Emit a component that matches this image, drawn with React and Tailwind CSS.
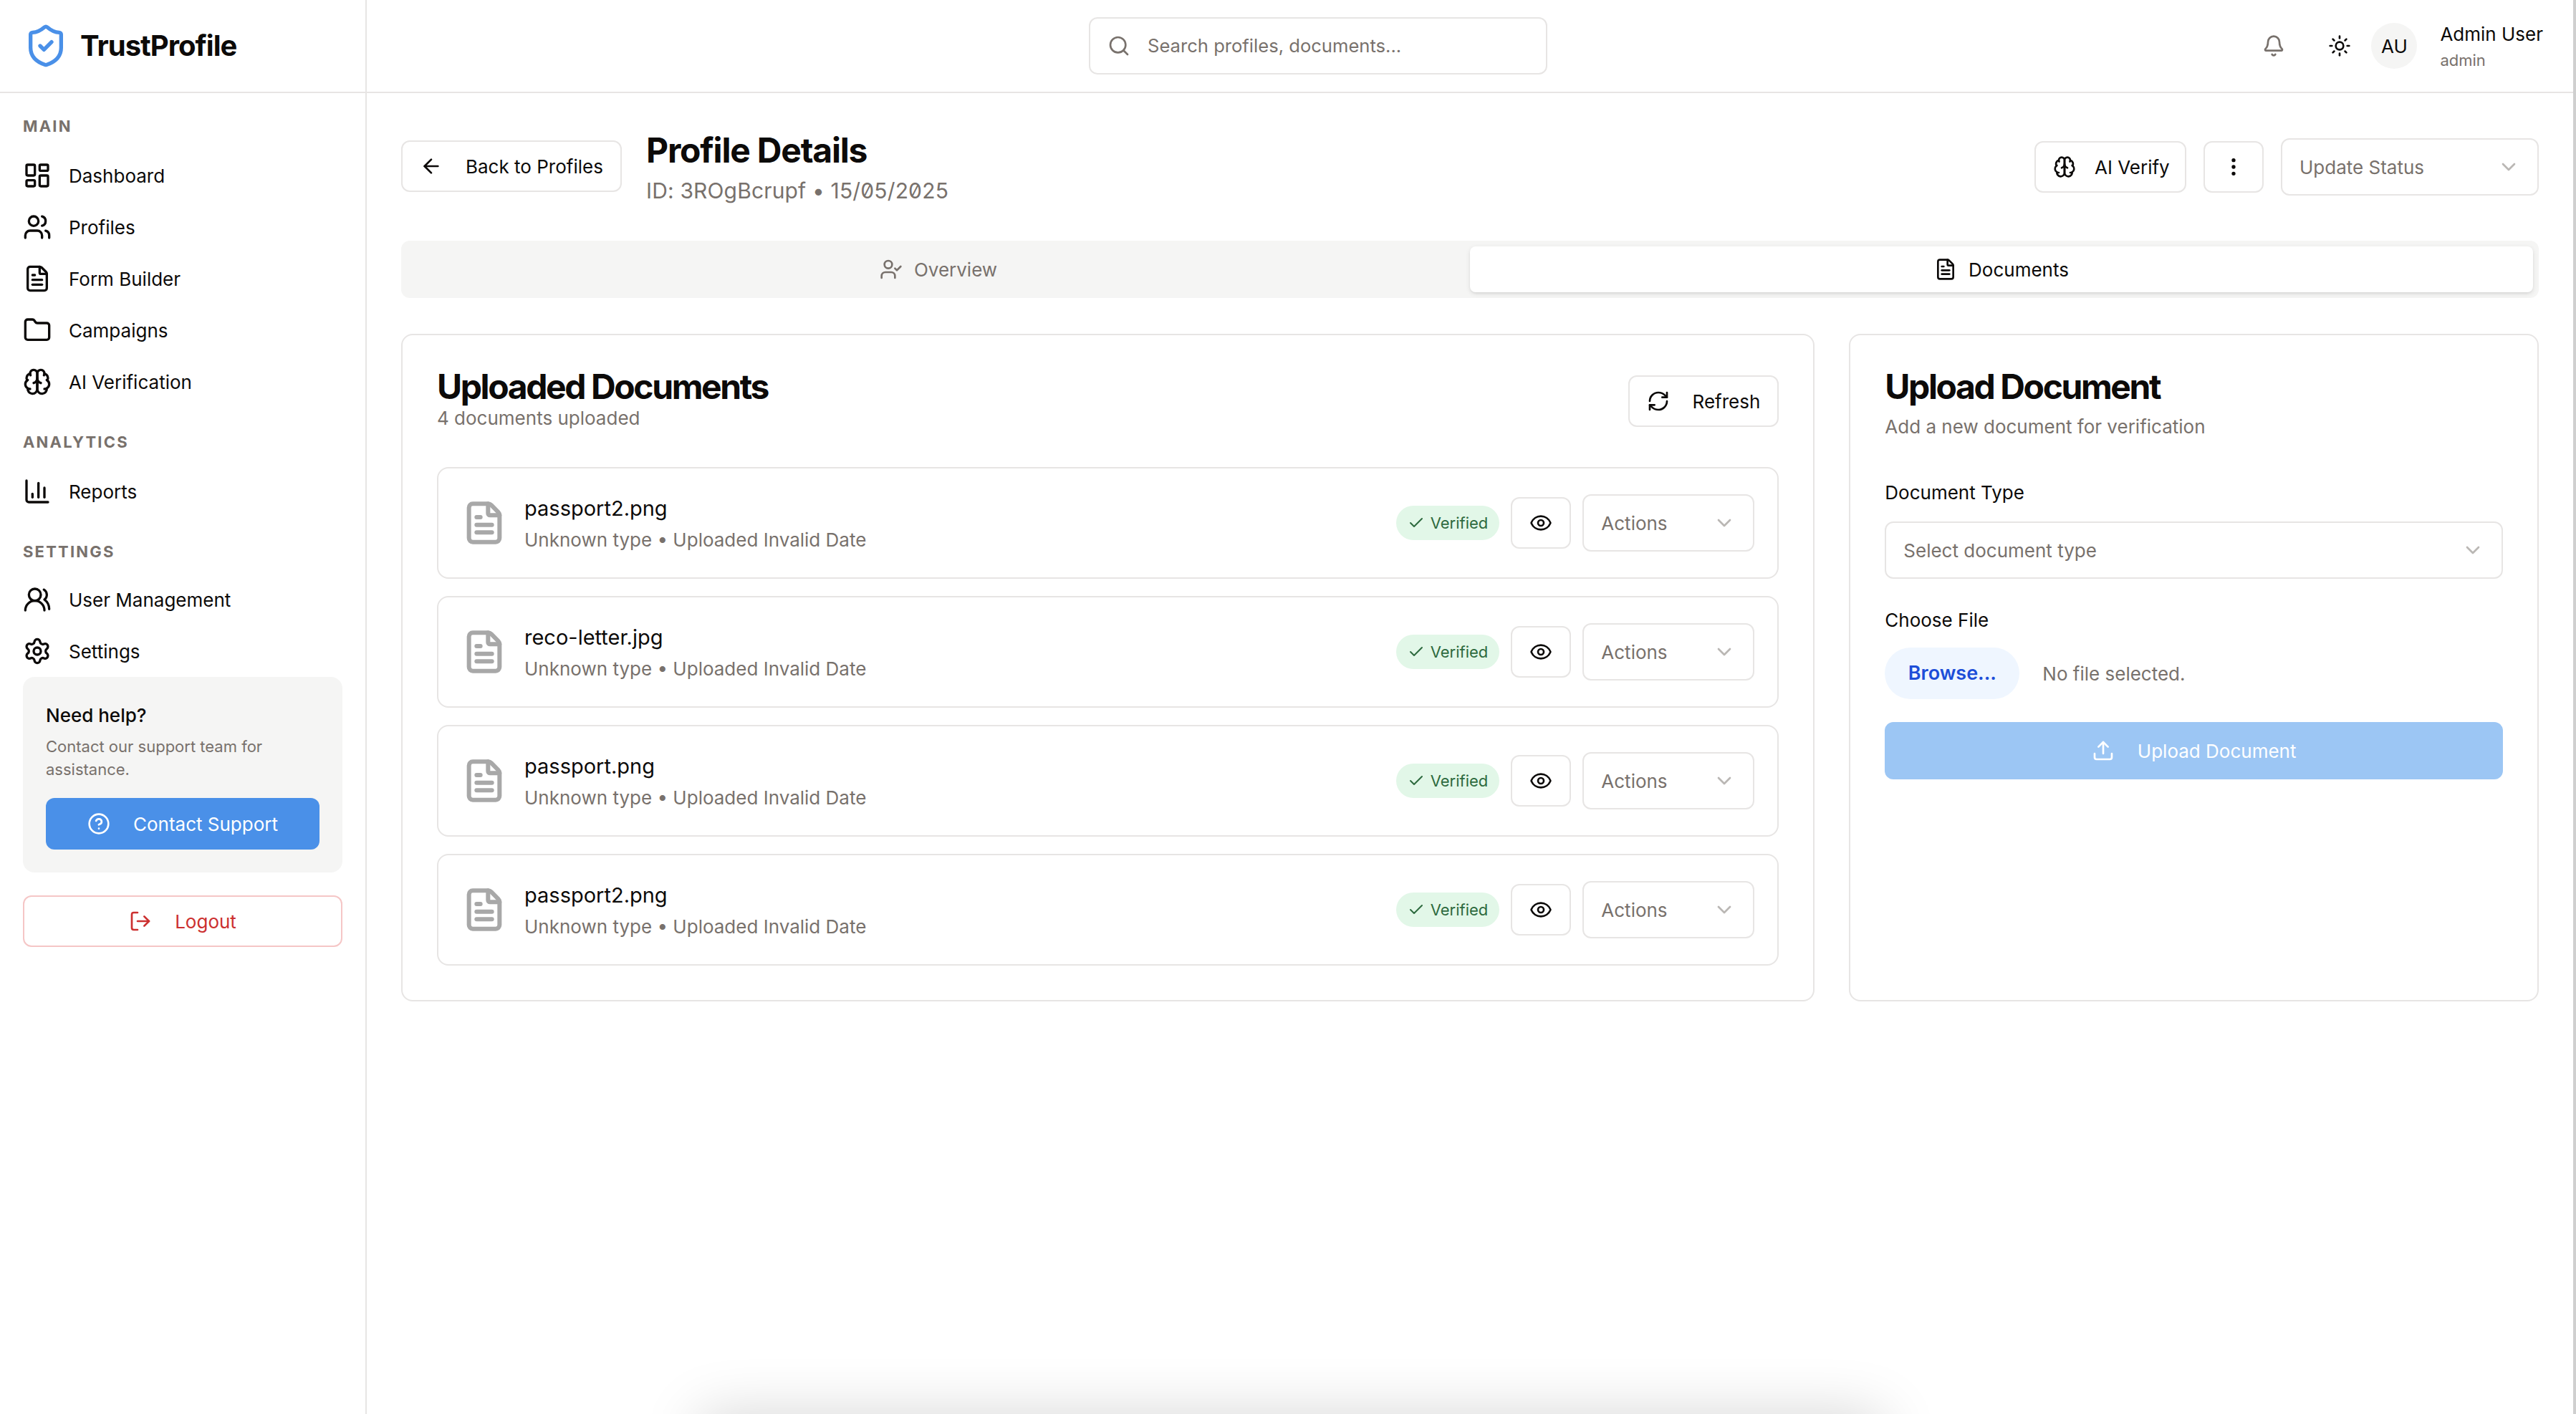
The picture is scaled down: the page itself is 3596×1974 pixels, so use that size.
import React from "react";
import {
  LayoutDashboard, Users, FileText, Folder, ChartColumn, UsersRound, Settings, CircleHelp, LogOut,
  Search, Bell, Sun, ArrowLeft, EllipsisVertical, ChevronDown, UserCheck, RefreshCw, Eye, Check, Upload, ShieldCheck,
} from "lucide-react";

const font = "font-['Inter','Liberation_Sans',sans-serif]";

function BrainIcon({ className = "" }) {
  return (
    <svg className={className} viewBox="0 0 24 24" fill="none" stroke="currentColor" strokeWidth="2" strokeLinecap="round" strokeLinejoin="round">
      <path d="M12 5a3 3 0 1 0-5.997.125 4 4 0 0 0-2.526 5.77 4 4 0 0 0 .556 6.588A4 4 0 1 0 12 18Z" />
      <path d="M12 5a3 3 0 1 1 5.997.125 4 4 0 0 1 2.526 5.77 4 4 0 0 1-.556 6.588A4 4 0 1 1 12 18Z" />
      <path d="M15 13a4.5 4.5 0 0 1-3-4 4.5 4.5 0 0 1-3 4" />
      <path d="M17.599 6.5a3 3 0 0 0 .399-1.375" />
      <path d="M6.003 5.125A3 3 0 0 0 6.401 6.5" />
      <path d="M3.477 10.896a4 4 0 0 1 .585-.396" />
      <path d="M19.938 10.5a4 4 0 0 1 .585.396" />
      <path d="M6 18a4 4 0 0 1-1.967-.516" />
      <path d="M19.967 17.484A4 4 0 0 1 18 18" />
    </svg>
  );
}

function NavItem({ icon: Icon, label }) {
  return (
    <div className="flex h-9 items-center gap-3 text-[13px] text-[#0c0a09]">
      <Icon className="h-5 w-5 shrink-0" />
      <span>{label}</span>
    </div>
  );
}

function SectionLabel({ children, className = "" }) {
  return <div className={`text-[11px] font-bold uppercase tracking-widest text-[#78716c] ${className}`}>{children}</div>;
}

function Sidebar() {
  return (
    <aside className="flex h-full w-64 shrink-0 flex-col border-r border-[#e7e5e4]">
      <div className="flex h-[65px] shrink-0 items-center gap-2 border-b border-[#e7e5e4] pl-4">
        <ShieldCheck className="h-8 w-8 text-[#4a90e8]" />
        <span className="text-xl font-bold tracking-tight text-[#0c0a09]">TrustProfile</span>
      </div>
      <nav className="flex flex-1 flex-col px-4 pt-[15px]">
        <SectionLabel className="mb-2">Main</SectionLabel>
        <NavItem icon={LayoutDashboard} label="Dashboard" />
        <NavItem icon={Users} label="Profiles" />
        <NavItem icon={FileText} label="Form Builder" />
        <NavItem icon={Folder} label="Campaigns" />
        <NavItem icon={BrainIcon} label="AI Verification" />
        <SectionLabel className="mt-4 mb-2">Analytics</SectionLabel>
        <NavItem icon={ChartColumn} label="Reports" />
        <SectionLabel className="mt-4 mb-[7px]">Settings</SectionLabel>
        <NavItem icon={UsersRound} label="User Management" />
        <NavItem icon={Settings} label="Settings" />
        <div className="rounded-lg bg-[#f5f5f4] px-4 pb-4 pt-[17px]">
          <div className="text-[13px] font-medium text-[#0c0a09]">Need help?</div>
          <p className="mt-1 text-[11px] leading-4 text-[#78716c]">Contact our support team for assistance.</p>
          <button className="mt-3 flex h-9 w-full items-center justify-center gap-4 whitespace-nowrap rounded-md bg-[#4a90e8] text-[13px] text-white">
            <CircleHelp className="h-4 w-4" />
            Contact Support
          </button>
        </div>
        <button className="mt-4 flex h-9 items-center justify-center gap-4 whitespace-nowrap rounded-md border border-[#f5c6c6] text-[13px] text-[#cc3030]">
          <LogOut className="h-4 w-4" />
          Logout
        </button>
      </nav>
    </aside>
  );
}

function TopBar() {
  return (
    <header className="flex h-[65px] shrink-0 items-center border-b border-[#e7e5e4] pl-[504px] pr-[21px]">
      <div className="flex h-10 w-80 items-center gap-3 whitespace-nowrap rounded-md border border-[#e7e5e4] pl-3 text-[12.8px] text-[#78716c]">
        <Search className="h-4 w-4" />
        Search profiles, documents...
      </div>
      <div className="ml-auto flex items-center">
        <button className="flex h-9 w-9 items-center justify-center text-[#78716c]"><Bell className="h-4 w-4" /></button>
        <button className="ml-2.5 flex h-9 w-9 items-center justify-center text-[#0c0a09]"><Sun className="h-4 w-4" /></button>
        <div className="ml-1 flex h-8 w-8 items-center justify-center rounded-full bg-[#f5f5f4] text-[13px] text-[#0c0a09]">AU</div>
        <div className="ml-4 flex flex-col whitespace-nowrap">
          <span className="text-[13px] leading-5 text-[#0c0a09]">Admin User</span>
          <span className="text-[11px] leading-4 text-[#78716c]">admin</span>
        </div>
      </div>
    </header>
  );
}

function OutlineButton({ icon: Icon, children, className = "gap-4" }) {
  return (
    <button className={`flex h-9 shrink-0 items-center whitespace-nowrap rounded-md border border-[#e7e5e4] px-3 text-[13px] text-[#0c0a09] ${className}`}>
      <Icon className="h-4 w-4 shrink-0" />
      {children}
    </button>
  );
}

function Select({ label, className = "" }) {
  return (
    <div className={`flex h-10 items-center justify-between whitespace-nowrap rounded-md border border-[#e7e5e4] px-3 text-[13px] text-[#78716c] ${className}`}>
      {label}
      <ChevronDown className="h-4 w-4 opacity-50" />
    </div>
  );
}

function DocumentRow({ name }) {
  return (
    <div className="flex items-center rounded-lg border border-[#e7e5e4] p-4">
      <FileText className="h-8 w-8 shrink-0 text-[#a8a8a8]" strokeWidth={2.25} />
      <div className="ml-3">
        <div className="text-[14.5px] leading-6 text-[#0c0a09]">{name}</div>
        <div className="text-[13px] leading-5 text-[#78716c]">Unknown type • Uploaded Invalid Date</div>
      </div>
      <div className="ml-auto flex items-center gap-2">
        <span className="flex h-6 items-center gap-1 rounded-full bg-[#e2f7e8] px-2 text-[11px] text-[#2d6a3e]">
          <Check className="h-3 w-3" />
          Verified
        </span>
        <button className="flex h-9 w-[42px] items-center justify-center rounded-md border border-[#e7e5e4] text-[#0c0a09]">
          <Eye className="h-4 w-4" />
        </button>
        <Select label="Actions" className="w-[120px]" />
      </div>
    </div>
  );
}

const cardTitle = "text-2xl font-bold leading-6 tracking-[-0.05em] text-[#0c0a09]";

export default function App() {
  return (
    <div className={`relative h-[1974px] w-[3596px] overflow-hidden bg-white ${font}`}>
      <div className="relative flex h-[987px] w-[1798px] [zoom:2]">
        <Sidebar />
        <div className="flex h-full min-w-0 flex-1 flex-col border-r-2 border-[#cfcfcf]">
          <TopBar />
          <main className="flex-1 p-6">
            <div className="flex items-center">
              <OutlineButton icon={ArrowLeft} className="mb-[2px] w-[154px] gap-4">Back to Profiles</OutlineButton>
              <div className="ml-[17px]">
                <h1 className="text-2xl font-bold leading-8 tracking-tight text-[#0c0a09]">Profile Details</h1>
                <p className="text-[15px] leading-6 tracking-[0.005em] text-[#78716c] slashed-zero">ID: 3ROgBcrupf • 15/05/2025</p>
              </div>
              <div className="mb-px ml-auto flex items-center gap-3">
                <OutlineButton icon={BrainIcon} className="w-[106px] gap-[13px]">AI Verify</OutlineButton>
                <button className="flex h-9 w-[42px] items-center justify-center rounded-md border border-[#e7e5e4] text-[#0c0a09]">
                  <EllipsisVertical className="h-4 w-4" />
                </button>
                <Select label="Update Status" className="w-[180px]" />
              </div>
            </div>

            <div className="mt-[23px] grid h-10 grid-cols-2 rounded-md bg-[#f5f5f4] p-1 text-[13px]">
              <div className="flex items-center justify-center gap-2 text-[#78716c]">
                <UserCheck className="h-4 w-4" />
                Overview
              </div>
              <div className="flex items-center justify-center gap-2 rounded-sm bg-white text-[#0c0a09] shadow-sm">
                <FileText className="h-4 w-4" />
                Documents
              </div>
            </div>

            <div className="mt-[25px] grid grid-cols-3 gap-6">
              <section className="col-span-2 rounded-lg border border-[#e7e5e4] p-6">
                <div className="flex items-center justify-between">
                  <div>
                    <h2 className={cardTitle}>Uploaded Documents</h2>
                    <p className="text-[13px] leading-5 text-[#78716c]">4 documents uploaded</p>
                  </div>
                  <OutlineButton icon={RefreshCw}>Refresh</OutlineButton>
                </div>
                <div className="mt-6 flex flex-col gap-3">
                  <DocumentRow name="passport2.png" />
                  <DocumentRow name="reco-letter.jpg" />
                  <DocumentRow name="passport.png" />
                  <DocumentRow name="passport2.png" />
                </div>
              </section>
              <section className="rounded-lg border border-[#e7e5e4] p-6">
                <h2 className={cardTitle}>Upload Document</h2>
                <p className="mt-1.5 text-[13px] leading-5 text-[#78716c]">Add a new document for verification</p>
                <label className="mt-[26px] block text-[13px] leading-5 text-[#0c0a09]">Document Type</label>
                <Select label="Select document type" className="mt-2.5" />
                <label className="mt-[19px] block text-[13px] leading-5 text-[#0c0a09]">Choose File</label>
                <div className="mt-[9px] flex items-center gap-4">
                  <span className="flex h-9 w-[94px] items-center justify-center rounded-full bg-[#eff6ff] text-[13.5px] font-semibold text-[#1d4ed8]">Browse...</span>
                  <span className="text-[13px] text-[#78716c]">No file selected.</span>
                </div>
                <button className="mt-4 flex h-10 w-full items-center justify-center gap-4 rounded-md bg-[#9cc6f4] text-[13px] text-white">
                  <Upload className="h-4 w-4" />
                  Upload Document
                </button>
              </section>
            </div>
          </main>
        </div>
        <div className="absolute left-[488px] top-full h-10 w-[826px] rounded-lg bg-white shadow-[0_0_40px_rgba(0,0,0,0.17)]" />
      </div>
    </div>
  );
}
